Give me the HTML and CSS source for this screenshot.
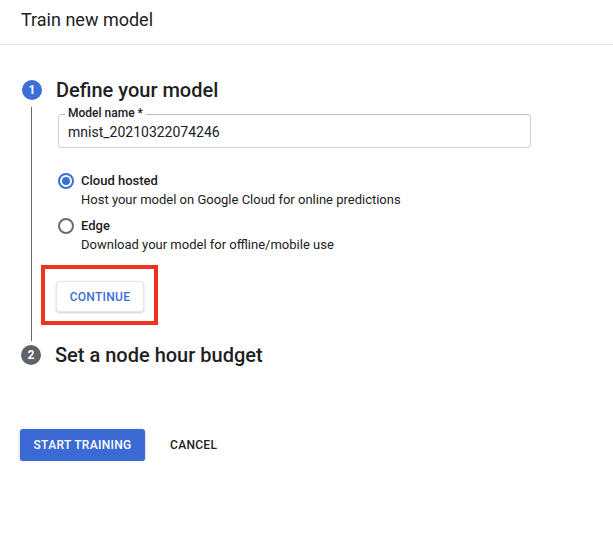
FILE: index.html
```html
<!DOCTYPE html>
<html>
<head>
<meta charset="utf-8">
<link rel="stylesheet" href="styles.css">
</head>
<body>
<div class="header">Train new model</div>
<div class="content">
  <div class="step">
    <div class="step-head">
      <span class="step-num active">1</span>
      <span class="step-title">Define your model</span>
    </div>
    <div class="step-body">
      <div class="field">
        <span class="field-label">Model name *</span>
        <span class="field-value">mnist_20210322074246</span>
      </div>
      <div class="radios">
        <div class="radio-item">
          <span class="radio checked"></span>
          <div class="radio-text">
            <div class="radio-title">Cloud hosted</div>
            <div class="radio-desc">Host your model on Google Cloud for online predictions</div>
          </div>
        </div>
        <div class="radio-item">
          <span class="radio"></span>
          <div class="radio-text">
            <div class="radio-title">Edge</div>
            <div class="radio-desc">Download your model for offline/mobile use</div>
          </div>
        </div>
      </div>
      <div class="highlight">
        <button class="btn-continue">CONTINUE</button>
      </div>
    </div>
  </div>
  <div class="step step-two">
    <div class="step-head">
      <span class="step-num">2</span>
      <span class="step-title">Set a node hour budget</span>
    </div>
  </div>
  <div class="actions">
    <button class="btn-primary">START TRAINING</button>
    <button class="btn-text">CANCEL</button>
  </div>
</div>
</body>
</html>
```
FILE: styles.css
```css
* { box-sizing: border-box; }
body {
  margin: 0;
  font-family: Roboto, "Noto Sans", sans-serif;
  color: #202124;
  background: #fff;
}
.header {
  height: 45px;
  padding: 9px 0 0 21px;
  font-size: 18px;
  color: #202124;
  border-bottom: 1px solid #e3e3e3;
}
.content {
  padding: 34px 0 0 22px;
}
.step-head {
  display: flex;
  align-items: center;
  height: 22px;
}
.step-num {
  width: 20px;
  height: 20px;
  border-radius: 50%;
  background: #5f6368;
  color: #fff;
  font-size: 12px;
  font-weight: 700;
  display: flex;
  align-items: center;
  justify-content: center;
}
.step-num.active { background: #3b6fd5; }
.step-title {
  margin-left: 14px;
  font-size: 20px;
  font-weight: 500;
  color: #1f1f1f;
}
.step-body {
  margin: 6px 0 0 9px;
  padding: 7px 0 16px 26px;
  border-left: 1px solid #6b6b6b;
  width: 500px;
}
.field {
  position: relative;
  height: 34px;
  border: 1px solid #d4d4d8;
  border-top-color: #bdbbc6;
  border-radius: 4px;
  padding: 7px 0 0 9px;
}
.field-label {
  position: absolute;
  top: -9px;
  left: 6px;
  padding: 0 3px;
  background: #fff;
  font-size: 12px;
  font-weight: 500;
  color: #202124;
}
.field-value {
  font-size: 14px;
  color: #202124;
}
.radios {
  margin-top: 25px;
  display: flex;
  flex-direction: column;
  gap: 10px;
}
.radio-item {
  display: flex;
  align-items: flex-start;
}
.radio {
  width: 16px;
  height: 16px;
  border: 2px solid #6c6c6c;
  border-radius: 50%;
  flex: none;
  position: relative;
}
.radio.checked {
  border-color: #3b6fd5;
}
.radio.checked::after {
  content: "";
  position: absolute;
  left: 2px;
  top: 2px;
  width: 8px;
  height: 8px;
  border-radius: 50%;
  background: #3b6fd5;
}
.radio-text { margin-left: 7px; }
.radio-title {
  font-size: 13px;
  font-weight: 500;
  line-height: 16px;
  color: #202124;
}
.radio-desc {
  margin-top: 3px;
  font-size: 13px;
  line-height: 16px;
  color: #202124;
}
.highlight {
  margin: 12px 0 0 -17px;
  width: 117px;
  height: 60px;
  border: 4px solid #f0321c;
  padding: 12px 0 0 11px;
}
.btn-continue {
  width: 88px;
  height: 31px;
  border: 1px solid #e6e6ea;
  border-radius: 4px;
  background: #fff;
  box-shadow: 0 1px 2px rgba(60,64,67,0.25);
  color: #3b6fd5;
  font-family: Roboto, sans-serif;
  font-size: 12px;
  font-weight: 500;
  letter-spacing: 0.3px;
  padding: 0;
}
.step-two .step-head { margin-top: 3px; margin-left: -1px; }
.actions {
  margin: 63px 0 0 -2px;
  display: flex;
  align-items: center;
}
.btn-primary {
  width: 125px;
  height: 32px;
  background: #3b6ad4;
  color: #fff;
  border: none;
  border-radius: 3px;
  box-shadow: 0 1px 3px rgba(60,64,67,0.35);
  font-family: Roboto, sans-serif;
  font-size: 12px;
  font-weight: 500;
  letter-spacing: 0.3px;
  padding: 0;
}
.btn-text {
  margin-left: 12px;
  height: 32px;
  background: none;
  border: none;
  font-family: Roboto, sans-serif;
  font-size: 12px;
  font-weight: 500;
  color: #202124;
  letter-spacing: 0.3px;
  padding: 0 13px;
}
```
